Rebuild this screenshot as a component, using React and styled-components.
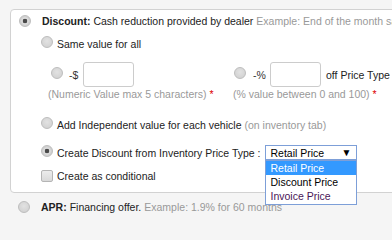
import React from "react";
import styled, { createGlobalStyle } from "styled-components";

const GlobalStyle = createGlobalStyle`
  html, body {
    margin: 0;
    background: #f5f5f5;
    overflow: hidden;
    height: 220px;
  }
  body {
    font-family: "Liberation Sans", Arial, sans-serif;
    font-size: 10.5px;
    color: #222;
  }
`;

const Page = styled.div`
  padding: 9px 0 0 10px;
  width: 420px;
  height: 211px;
  overflow: hidden;
`;

const Card = styled.div`
  background: #fff;
  border: 1px solid #d2d2d2;
  border-radius: 4px;
  padding: 4px 8px 9px 8px;
`;

const Row = styled.div`
  display: flex;
  align-items: center;
  height: ${({ h }) => h || 14}px;
  margin-top: ${({ mt }) => mt || 0}px;
  white-space: nowrap;
`;

const SubOptions = styled.div`
  padding-left: 22px;
`;

const AmountGrid = styled.div`
  display: grid;
  grid-template-columns: 185px 1fr;
  margin-left: 7px;
  margin-top: ${({ mt }) => mt || 0}px;
  white-space: nowrap;
`;

const Cell = styled.div`
  display: flex;
  align-items: center;
  height: ${({ h }) => h || 14}px;
`;

const Radio = styled.span`
  flex: none;
  width: 12px;
  height: 12px;
  box-sizing: border-box;
  border-radius: 50%;
  border: 1px solid #bdbdbd;
  background: ${({ checked }) =>
    checked
      ? "radial-gradient(circle, #4a4a4a 0 2px, #dcdcdc 2.6px 3.4px, #d0d0d0 4px)"
      : "radial-gradient(circle at 50% 40%, #e2e2e2 0, #d4d4d4 70%)"};
  margin-right: ${({ gap }) => gap || 4}px;
  margin-left: ${({ ml }) => ml || 0}px;
  margin-bottom: ${({ raised }) => (raised ? 4 : 0)}px;
`;

const Checkbox = styled.span`
  flex: none;
  width: 12px;
  height: 12px;
  box-sizing: border-box;
  border-radius: 2px;
  border: 1px solid #b5b5b5;
  background: linear-gradient(#ececec, #d9d9d9);
  margin-right: 4px;
`;

const Label = styled.span`
  color: #222;
`;

const Strong = styled.b`
  color: #222;
  margin-right: 3px;
`;

const Muted = styled.span`
  color: #999;
  margin-left: ${({ ml }) => ml || 0}px;
`;

const Req = styled.span`
  color: #d00;
  margin-left: 3px;
`;

const Sign = styled.span`
  color: #333;
  width: ${({ w }) => w}px;
`;

const TextBox = styled.span`
  display: block;
  width: 51px;
  height: 25px;
  box-sizing: border-box;
  border: 1px solid #ccc;
  border-radius: 3px;
  background: #fff;
  margin-right: 5px;
`;

const SelectWrap = styled.div`
  position: relative;
  margin-left: 5px;
`;

const SelectBox = styled.div`
  display: flex;
  align-items: center;
  justify-content: space-between;
  width: 92px;
  height: 15px;
  box-sizing: border-box;
  border: 1px solid #7d9fd8;
  padding: 0 5px 0 4px;
  background: #fff;
  color: #000;
`;

const Arrow = styled.span`
  font-size: 10px;
  line-height: 1;
  color: #000;
`;

const Options = styled.ul`
  position: absolute;
  top: 15px;
  left: 0;
  width: 92px;
  box-sizing: border-box;
  margin: 0;
  padding: 0 0 1px;
  list-style: none;
  background: #fff;
  border: 1px solid #7d9fd8;
  z-index: 2;
`;

const Option = styled.li`
  height: 14px;
  line-height: 14px;
  padding-left: 4px;
  background: ${({ active }) => (active ? "#3399ff" : "#fff")};
  color: ${({ active, tone }) => (active ? "#fff" : tone || "#000")};
`;

const Footer = styled.div`
  padding-left: 8px;
`;

export default function App() {
  return (
    <>
      <GlobalStyle />
      <Page>
        <Card>
          <Row>
            <Radio checked gap={11} />
            <Strong>Discount:</Strong>
            <Label>Cash reduction provided by dealer</Label>
            <Muted ml={3}>Example: End of the month sale</Muted>
          </Row>
          <SubOptions>
            <Row mt={9}>
              <Radio raised />
              <Label>Same value for all</Label>
            </Row>
            <AmountGrid mt={11}>
              <Cell h={25}>
                <Radio ml={3} gap={6} raised />
                <Sign w={14}>-$</Sign>
                <TextBox />
              </Cell>
              <Cell h={25}>
                <Radio ml={1} gap={7} raised />
                <Sign w={17}>-%</Sign>
                <TextBox />
                <Label>off Price Type</Label>
              </Cell>
              <Cell>
                <Muted>(Numeric Value max 5 characters)</Muted>
                <Req>*</Req>
              </Cell>
              <Cell>
                <Muted>(% value between 0 and 100)</Muted>
                <Req>*</Req>
              </Cell>
            </AmountGrid>
            <Row mt={17}>
              <Radio raised />
              <Label>Add Independent value for each vehicle</Label>
              <Muted ml={3}>(on inventory tab)</Muted>
            </Row>
            <Row mt={13} h={15}>
              <Radio checked raised />
              <Label>Create Discount from Inventory Price Type :</Label>
              <SelectWrap>
                <SelectBox>
                  <span>Retail Price</span>
                  <Arrow>▼</Arrow>
                </SelectBox>
                <Options>
                  <Option active>Retail Price</Option>
                  <Option>Discount Price</Option>
                  <Option tone="#4a1658">Invoice Price</Option>
                </Options>
              </SelectWrap>
            </Row>
            <Row mt={9}>
              <Checkbox />
              <Label>Create as conditional</Label>
            </Row>
          </SubOptions>
        </Card>
        <Footer>
          <Row mt={7}>
            <Radio gap={11} />
            <Strong>APR:</Strong>
            <Label>Financing offer.</Label>
            <Muted ml={3}>Example: 1.9% for 60 months</Muted>
          </Row>
        </Footer>
      </Page>
    </>
  );
}
